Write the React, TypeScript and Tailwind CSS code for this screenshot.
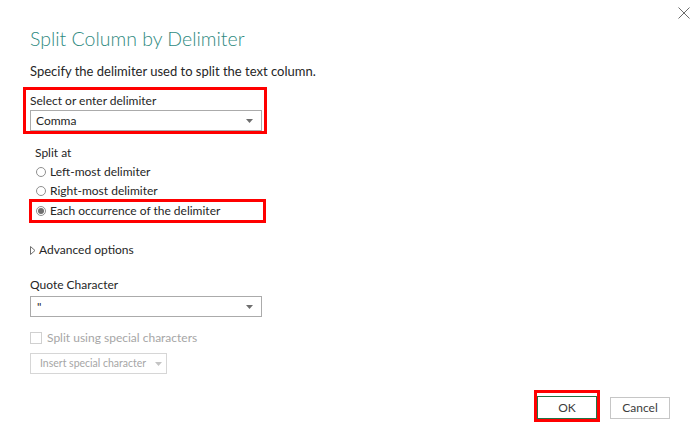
import React, { useState } from "react";

const Caret = ({ color = "#6e6e6e" }: { color?: string }) => (
  <svg width="7" height="4" viewBox="0 0 7 4" className="shrink-0">
    <path d="M0 0 H7 L3.5 4 Z" fill={color} />
  </svg>
);

const Radio = ({ checked, label, onClick }: { checked: boolean; label: string; onClick: () => void }) => (
  <label className="flex items-center h-[16px] cursor-default" onClick={onClick}>
    <span className="w-[10px] h-[10px] rounded-full border border-[#8f8f8f] bg-white flex items-center justify-center shrink-0">
      {checked && <span className="w-[6px] h-[6px] rounded-full bg-[#6f6f6f]" />}
    </span>
    <span className="ml-[4px] leading-[16px]">{label}</span>
  </label>
);

const App = () => {
  const [splitAt, setSplitAt] = useState("each");

  return (
    <div className="w-[700px] h-[448px] bg-white text-[#262626] text-[12px] font-['Segoe_UI','Lato',sans-serif] flex flex-col">
      <div className="flex justify-end pt-[7px] pr-[10px] h-[19px]">
        <svg width="12" height="12" viewBox="0 0 12 12">
          <path d="M0.5 0.5 L11.5 11.5 M11.5 0.5 L0.5 11.5" stroke="#6b6b6b" strokeWidth="1" />
        </svg>
      </div>

      <div className="pl-[30px] flex flex-col">
        <h1 className="mt-[6px] text-[19.5px] leading-[28px] font-light text-[#2f8a7f]">Split Column by Delimiter</h1>
        <p className="mt-[10px] text-[13px] leading-[16px]">Specify the delimiter used to split the text column.</p>

        <div className="mt-[8px] -ml-[7px] w-[244px] border-[3px] border-[#ff0000] pl-[4px] pt-[3px]">
          <div className="leading-[16px]">Select or enter delimiter</div>
          <div className="mt-[1px] w-[232px] h-[21px] border border-[#ababab] flex items-center justify-between pl-[5px] pr-[8px]">
            <span>Comma</span>
            <Caret />
          </div>
        </div>

        <div className="pl-[5px] mt-[11px] flex flex-col">
          <div className="leading-[16px]">Split at</div>
          <div className="mt-[3px] pl-[1px]">
            <Radio checked={splitAt === "left"} label="Left-most delimiter" onClick={() => setSplitAt("left")} />
          </div>
          <div className="mt-[3px] pl-[1px]">
            <Radio checked={splitAt === "right"} label="Right-most delimiter" onClick={() => setSplitAt("right")} />
          </div>
          <div className="-ml-[6px] w-[237px] h-[24px] border-[3px] border-[#ff0000] pl-[4px] flex items-center">
            <Radio checked={splitAt === "each"} label="Each occurrence of the delimiter" onClick={() => setSplitAt("each")} />
          </div>
        </div>

        <div className="mt-[19px] flex items-center h-[16px]">
          <svg width="6" height="9" viewBox="0 0 6 9" className="shrink-0">
            <path d="M0.5 0.5 L5 4.5 L0.5 8.5 Z" fill="none" stroke="#707070" strokeWidth="1" />
          </svg>
          <span className="ml-[3px] leading-[16px]">Advanced options</span>
        </div>

        <div className="mt-[19px] leading-[16px]">Quote Character</div>
        <div className="mt-[3px] w-[232px] h-[21px] border border-[#ababab] flex items-center justify-between pl-[6px] pr-[8px]">
          <span>"</span>
          <Caret />
        </div>

        <div className="mt-[13px] flex items-center h-[16px] text-[#a6a6a6]">
          <span className="w-[12px] h-[12px] border border-[#d0d0d0] bg-white shrink-0" />
          <span className="ml-[5px] leading-[16px]">Split using special characters</span>
        </div>

        <div className="mt-[7px] w-[137px] h-[21px] border border-[#d6d6d6] flex items-center pl-[9px] text-[#a6a6a6] text-[10.5px] whitespace-nowrap">
          <span>Insert special character</span>
          <span className="ml-[9px]">
            <Caret color="#c4c4c4" />
          </span>
        </div>
      </div>

      <div className="mt-[16px] flex justify-end items-end pr-[30px] gap-[10px]">
        <div className="border-[3px] border-[#ff0000] pt-[3px]">
          <button className="w-[60px] h-[23px] border border-[#217346] bg-white text-[#3c3c3c] text-[12px] leading-none">OK</button>
        </div>
        <button className="mb-[3px] w-[60px] h-[22px] border border-[#c6c6c6] bg-white text-[#3c3c3c] text-[12px] leading-none">Cancel</button>
      </div>
    </div>
  );
};

export default App;
